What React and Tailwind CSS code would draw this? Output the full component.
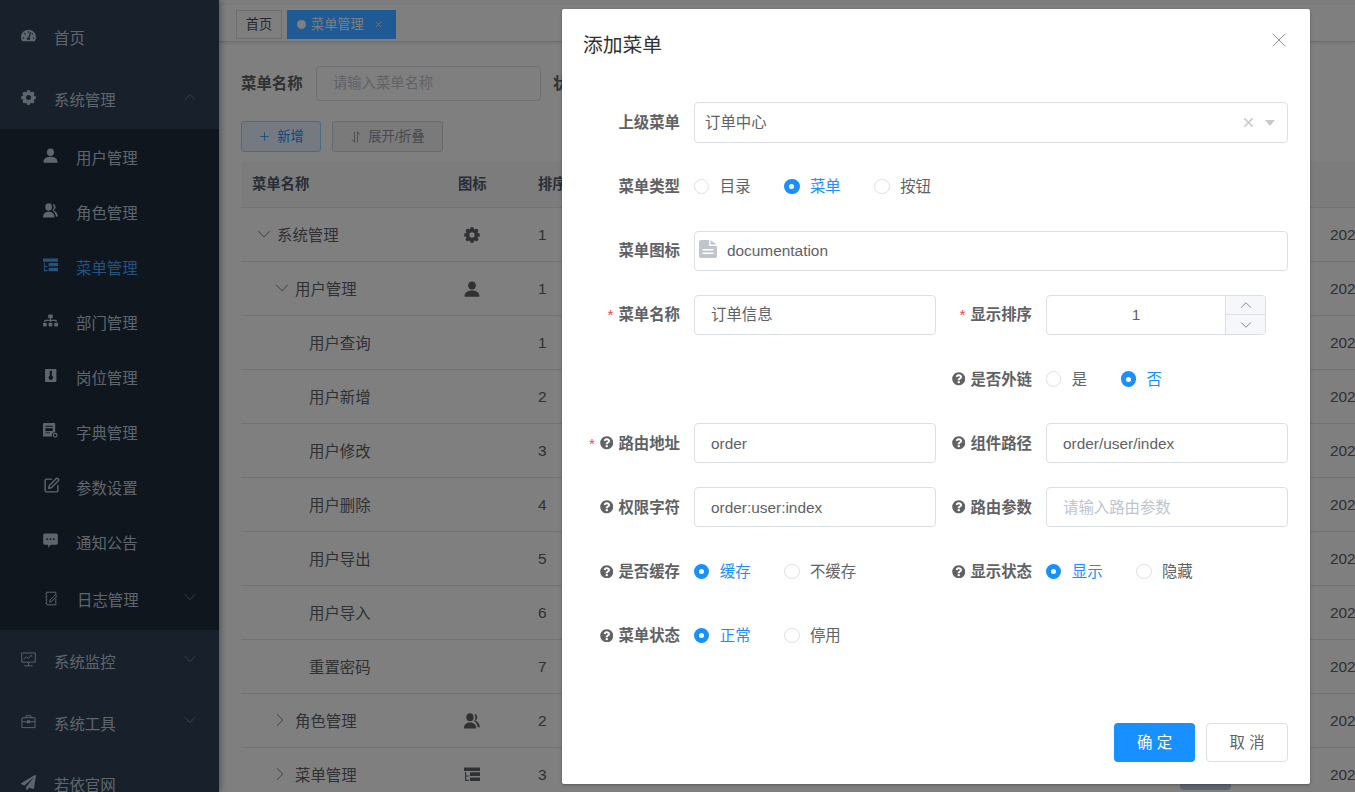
import { FaTachometerAlt, FaSitemap, FaPaperPlane, FaQuestionCircle } from "react-icons/fa";
import { Plus, ChevronUp, ChevronDown, ChevronRight, X, SquarePen } from "lucide-react";

function GearIcon({ className }) {
  const lobes = [0, 45, 90, 135, 180, 225, 270, 315];
  return (
    <svg viewBox="0 0 24 24" className={className} fill="currentColor">
      <circle cx="12" cy="12" r="6.6" fill="none" stroke="currentColor" strokeWidth="5.2" />
      {lobes.map((a) => (
        <circle key={a} cx={12 + 9 * Math.cos((a * Math.PI) / 180)} cy={12 + 9 * Math.sin((a * Math.PI) / 180)} r="3" />
      ))}
    </svg>
  );
}

function UserIcon({ className }) {
  return (
    <svg viewBox="0 0 16 16" className={className} fill="currentColor">
      <ellipse cx="8" cy="4.4" rx="3.8" ry="4" />
      <path d="M.6 15.2c-.3-3.6 2.6-5.8 7.4-5.8s7.7 2.2 7.4 5.8c0 .4-.3.6-.7.6H1.3c-.4 0-.7-.2-.7-.6z" />
    </svg>
  );
}

function PeoplesIcon({ className }) {
  return (
    <svg viewBox="0 0 16 16" className={className} fill="currentColor">
      <ellipse cx="6" cy="4.2" rx="3.6" ry="4" />
      <path d="M0 15.4c-.2-3.6 2-6 6-6s6.400 2.400 6.200 6H0z" />
      <path d="M10.400.8c1.800.3 2.900 1.700 2.900 3.400 0 1.500-.8 2.800-2.100 3.400 2.700 1 4.400 3.400 4.800 6.700h-2.200c-.5-2.800-1.700-5-3.800-6.200 1-1.100 1.500-2.400 1.400-3.900-.1-1.300-.4-2.500-1-3.400z" />
    </svg>
  );
}

function TreeTableIcon({ className }) {
  return (
    <svg viewBox="0 0 16 16" className={className} fill="currentColor">
      <path d="M0 .5h16v3.400H4.800v.1H0zM1 5h1.100v3.400H4.800v1.100H2.100v3.300H4.800V14H1z" />
      <path d="M6 5.300h10v3.600H6zM6 10.400h10V14H6z" />
    </svg>
  );
}

function PostIcon({ className }) {
  return (
    <svg viewBox="0 0 16 16" className={className} fill="currentColor">
      <path fillRule="evenodd" d="M3 1h10.500c.5 0 .8.300.8.800v12.400c0 .5-.3.800-.8.800H3c-.5 0-.8-.3-.8-.8V1.800c0-.5.300-.8.800-.8zm4.200 2v5.200a2.300 2.300 0 1 0 2.300 0V3z" />
    </svg>
  );
}

function DictIcon({ className }) {
  return (
    <svg viewBox="0 0 16 16" className={className} fill="currentColor">
      <path fillRule="evenodd" d="M1 0h11c.6 0 1 .4 1 1v8.800a3.300 3.300 0 0 0-3.400 4.700H1c-.6 0-1-.4-1-1V1c0-.6.4-1 1-1zm1.500 3v1h8V3zm0 2.500v3h8v-3zm0 4.500v1h5v-1z" />
      <circle cx="13" cy="13" r="2" fill="none" stroke="currentColor" strokeWidth="1.300" />
    </svg>
  );
}

function LogIcon({ className }) {
  return (
    <svg viewBox="0 0 16 16" className={className} fill="none" stroke="currentColor" strokeWidth="1.100">
      <path d="M3 .8h10.500v3M13.500 8v7.200H3M1.500 3h2M1.500 6.500h2M1.500 10h2M1.500 13.500h2" />
      <path d="M3 .8v14.400" strokeDasharray="2 1.500" />
      <path d="M13 3.800l1.700 1.700-6 6-2.300.6.600-2.300z" />
    </svg>
  );
}

function MonitorIcon({ className }) {
  return (
    <svg viewBox="0 0 16 16" className={className} fill="none" stroke="currentColor" strokeWidth="1">
      <path d="M.8 1h14.400v9.800H.8zM8 10.800v3.700M3.500 14.700h9" />
      <path d="M3 8l2.800-3 2 2 3-3.500.8 1.500" />
    </svg>
  );
}

function ToolIcon({ className }) {
  return (
    <svg viewBox="0 0 16 16" className={className} fill="none" stroke="currentColor" strokeWidth="1">
      <path d="M1 4h14v10.500H1zM5.500 4V1.800h5V4M1 8.300h5.800M9.200 8.300H15" />
      <rect x="6.800" y="7.300" width="2.400" height="2" fill="currentColor" />
    </svg>
  );
}

function MessageIcon({ className }) {
  return (
    <svg viewBox="0 0 16 16" className={className} fill="currentColor">
      <path fillRule="evenodd" d="M2 .5h12c1 0 1.800.8 1.800 1.800v8.400c0 1-.8 1.800-1.800 1.800H8.500L5.500 15.500V12.500H2c-1 0-1.800-.8-1.800-1.800V2.300C.2 1.300 1 .5 2 .5zM4.500 5.500a1 1 0 1 0 0 2 1 1 0 0 0 0-2zm3.500 0a1 1 0 1 0 0 2 1 1 0 0 0 0-2zm3.500 0a1 1 0 1 0 0 2 1 1 0 0 0 0-2z" />
    </svg>
  );
}

function DocIcon({ className }) {
  return (
    <svg viewBox="0 0 18 18" className={className} fill="currentColor">
      <path fillRule="evenodd" d="M2 0h8v4.500c0 1 .7 1.500 1.500 1.500H18v10c0 1.100-.9 2-2 2H2c-1.100 0-2-.9-2-2V2C0 .9.900 0 2 0zm1.500 9v1.500h11V9zm0 3.500V14h11v-1.500z" />
      <path d="M11.500 .3L17.800 4.500h-6.300z" />
    </svg>
  );
}

function ExpandIcon({ className }) {
  return (
    <svg viewBox="0 0 16 16" className={className} fill="none" stroke="currentColor" strokeWidth="1.200">
      <path d="M6 1v14L2.500 11M10 15V1l3.500 4" />
    </svg>
  );
}

function SideItem({ icon: Icon, label, sub, active, arrow, iconSize = "w-[15px] h-[15px]", iconGap = "mr-[18px]" }) {
  return (
    <div className={`flex items-center ${sub ? "h-[55px] pl-[43px] bg-[#1f2d3d]" : "h-[61.6px] pl-[21px]"} ${active ? "text-[#46a6ff]" : "text-[#bfcbd9]"}`}>
      <Icon className={`${iconSize} ${iconGap} shrink-0 -translate-y-[1px]`} size={15} />
      <span className="text-[15.4px] translate-y-[1.5px]">{label}</span>
      {arrow === "up" && <ChevronUp className="ml-auto mr-[19px] -translate-y-[1px] text-[#909399]" size={20} strokeWidth={1} />}
      {arrow === "down" && <ChevronDown className="ml-auto mr-[19px] -translate-y-[2px] text-[#909399]" size={20} strokeWidth={1} />}
    </div>
  );
}

function Sidebar() {
  return (
    <aside className="w-[219px] shrink-0 h-[792px] overflow-hidden bg-[#304156] pt-[6px] shadow-[2px_0_6px_rgba(0,21,41,0.35)] z-10">
      <SideItem icon={FaTachometerAlt} label="首页" />
      <SideItem icon={GearIcon} label="系统管理" arrow="up" />
      <SideItem sub icon={UserIcon} label="用户管理" />
      <SideItem sub icon={PeoplesIcon} label="角色管理" />
      <SideItem sub active icon={TreeTableIcon} label="菜单管理" />
      <SideItem sub icon={FaSitemap} label="部门管理" />
      <SideItem sub icon={PostIcon} label="岗位管理" />
      <SideItem sub icon={DictIcon} label="字典管理" />
      <SideItem sub icon={SquarePen} label="参数设置" iconSize="w-[17px] h-[17px]" iconGap="mr-[16px]" />
      <SideItem sub icon={MessageIcon} label="通知公告" />
      <div className="flex items-center h-[60.6px] pl-[44px] bg-[#1f2d3d] text-[#bfcbd9]">
        <LogIcon className="w-[14px] h-[15px] mr-[19px] -translate-y-[1px]" />
        <span className="text-[15.4px] translate-y-[1px]">日志管理</span>
        <ChevronDown className="ml-auto mr-[19px] -translate-y-[2px] text-[#909399]" size={20} strokeWidth={1} />
      </div>
      <SideItem icon={MonitorIcon} label="系统监控" arrow="down" />
      <SideItem icon={ToolIcon} label="系统工具" arrow="down" />
      <SideItem icon={FaPaperPlane} label="若依官网" />
    </aside>
  );
}

const rows = [
  { name: "系统管理", level: 0, open: true, icon: GearIcon, sort: 1 },
  { name: "用户管理", level: 1, open: true, icon: UserIcon, sort: 1 },
  { name: "用户查询", level: 2, sort: 1 },
  { name: "用户新增", level: 2, sort: 2 },
  { name: "用户修改", level: 2, sort: 3 },
  { name: "用户删除", level: 2, sort: 4 },
  { name: "用户导出", level: 2, sort: 5 },
  { name: "用户导入", level: 2, sort: 6 },
  { name: "重置密码", level: 2, sort: 7 },
  { name: "角色管理", level: 1, icon: PeoplesIcon, sort: 2 },
  { name: "菜单管理", level: 1, icon: TreeTableIcon, sort: 3 },
];

function TableName({ row }) {
  if (row.level === 2) {
    return <span className="pl-[68px] translate-y-[1px]">{row.name}</span>;
  }
  if (row.open) {
    return (
      <span className={`flex items-center ${row.level === 0 ? "pl-[12px]" : "pl-[30px]"}`}>
        <ChevronDown size={22} strokeWidth={1.100} className="mr-[2px] text-[#909399]" />
        <span className="translate-y-[1px]">{row.name}</span>
      </span>
    );
  }
  return (
    <span className="flex items-center pl-[28px]">
      <ChevronRight size={22} strokeWidth={1.100} className="mr-[4px] text-[#909399]" />
      <span className="translate-y-[1px]">{row.name}</span>
    </span>
  );
}

function MenuTable() {
  return (
    <div className="w-[1218px] text-[15.4px] text-[#606266]">
      <div className="grid grid-cols-[206px_80px_792px_140px] h-[47px] items-center bg-[#f8f8f9] border-b border-[#dfe6ec] font-bold text-[14.3px] text-[#515a6e]">
        <div className="pl-[11px] translate-y-[1px]">菜单名称</div>
        <div className="pl-[11px] translate-y-[1px]">图标</div>
        <div className="pl-[11px] translate-y-[1px]">排序</div>
        <div />
      </div>
      {rows.map((row) => {
        const Icon = row.icon;
        return (
          <div key={row.name} className="grid grid-cols-[206px_80px_792px_140px] h-[54px] items-center border-b border-[#dfe6ec]">
            <TableName row={row} />
            <div className="pl-[17px]">{Icon && <Icon className="w-[16px] h-[16px]" />}</div>
            <div className="pl-[11px]">{row.sort}</div>
            <div className="pl-[11px] whitespace-nowrap">2021-05-26 18:56:54</div>
          </div>
        );
      })}
    </div>
  );
}

function Main() {
  return (
    <main className="flex-1 min-w-0 h-[792px] overflow-hidden bg-white">
      <div className="h-[5px] bg-[#fafafa]" />
      <div className="h-[37px] flex items-start pt-[5px] pl-[17px] gap-[5px] bg-white border-b border-[#d8dce5] shadow-[0_1px_3px_rgba(0,0,0,0.12)]">
        <div className="h-[29px] w-[46px] border border-[#d8dce5] flex items-center justify-center text-[13.2px] text-[#495060]">首页</div>
        {/* 选中的标签颜色比遮罩后的结果更亮，放到遮罩上面 */}
        <div className="relative z-30 h-[29px] w-[109px] bg-[#205a94] flex items-center pl-[10px] text-[13.2px] text-[#7f7f7f]">
          <span className="w-[9px] h-[9px] rounded-full bg-[#7f7f7f] mr-[5px]" />
          菜单管理
          <X size={9} className="ml-[10px]" />
        </div>
      </div>
      <div className="pl-[22px] pt-[24px]">
        <div className="flex items-center h-[35px] mb-[20px]">
          <span className="w-[75px] font-bold text-[15.4px] text-[#606266]">菜单名称</span>
          <div className="w-[225px] h-[35px] border border-[#dcdfe6] rounded-[4px] flex items-center pl-[16px] text-[14.3px] text-[#c0c4cc]">请输入菜单名称</div>
          <span className="ml-[12px] font-bold text-[15.4px] text-[#606266]">状态</span>
        </div>
        <div className="flex gap-[11px] mb-[9px] text-[13.2px]">
          <div className="w-[80px] h-[31px] rounded-[3px] border border-[#a3d3ff] bg-[#e8f4ff] text-[#1890ff] flex items-center justify-center gap-[6px]">
            <Plus size={13} strokeWidth={1.5} />
            新增
          </div>
          <div className="w-[111px] h-[31px] rounded-[3px] border border-[#d3d4d6] bg-[#f4f4f5] text-[#909399] flex items-center justify-center gap-[6px]">
            <ExpandIcon className="w-[12px] h-[12px]" />
            展开/折叠
          </div>
        </div>
        <MenuTable />
      </div>
      <div className="absolute left-[1180px] top-[770px] w-[51px] h-[20px] rounded-[4px] bg-[#b8c8dc]" />
    </main>
  );
}

function Label({ text, required, help, width }) {
  return (
    <div className={`${width} mr-[14px] shrink-0 flex items-center justify-end font-bold text-[15.4px] text-[#606266]`}>
      {required && <span className="text-[#ff4949] mr-[5px] font-normal">*</span>}
      {help && <FaQuestionCircle size={13.5} className="mr-[5px]" />}
      {text}
    </div>
  );
}

function Input({ value, placeholder, width = "w-[242px]" }) {
  return (
    <div className={`${width} h-[40px] border border-[#dcdfe6] rounded-[4px] pl-[16px] flex items-center text-[15.4px] ${value ? "text-[#606266]" : "text-[#c0c4cc]"}`}>
      {value || placeholder}
    </div>
  );
}

function Radio({ label, checked }) {
  return (
    <div className={`flex items-center mr-[33.600px] text-[15.4px] ${checked ? "text-[#1890ff]" : "text-[#606266]"}`}>
      <span className={`w-[15.400px] h-[15.400px] rounded-full mr-[10.400px] flex items-center justify-center ${checked ? "bg-[#1890ff]" : "border border-[#dcdfe6]"}`}>
        {checked && <span className="w-[5px] h-[5px] rounded-full bg-white" />}
      </span>
      {label}
    </div>
  );
}

function RadioGroup({ options, value, width = "w-[242px]" }) {
  return (
    <div className={`${width} flex items-center`}>
      {options.map((o) => (
        <Radio key={o} label={o} checked={o === value} />
      ))}
    </div>
  );
}

function Row({ children }) {
  return <div className="flex items-center h-[40px]">{children}</div>;
}

function Dialog() {
  return (
    <div className="w-[748px] h-[775px] mt-[9px] ml-[562px] bg-white rounded-[2px] shadow-[0_1px_3px_rgba(0,0,0,0.3)] flex flex-col">
      <div className="flex items-center justify-between pt-[22px] pl-[21px] pr-[19px]">
        <span className="text-[19.8px] leading-[26px] text-[#303133] translate-y-[0.5px]">添加菜单</span>
        <X size={24} strokeWidth={1} className="text-[#909399] -translate-y-[4px]" />
      </div>
      <div className="pt-[45.700px] flex flex-col gap-[24.100px]">
        <Row>
          <Label text="上级菜单" width="w-[118px]" />
          <div className="w-[594px] h-[41px] border border-[#dcdfe6] rounded-[4px] pl-[10px] pr-[12px] flex items-center text-[15.4px] text-[#606266]">
            订单中心
            <X size={15} strokeWidth={2.5} className="ml-auto mr-[9px] text-[#c8c8c8]" />
            <span className="w-0 h-0 border-x-[5.5px] border-x-transparent border-t-[6px] border-t-[#c8c8c8]" />
          </div>
        </Row>
        <Row>
          <Label text="菜单类型" width="w-[118px]" />
          <RadioGroup options={["目录", "菜单", "按钮"]} value="菜单" width="w-[594px]" />
        </Row>
        <Row>
          <Label text="菜单图标" width="w-[118px]" />
          <div className="w-[594px] h-[40px] border border-[#dcdfe6] rounded-[4px] pl-[4px] flex items-start pt-[8px] text-[15.4px] text-[#606266]">
            <DocIcon className="w-[18px] h-[18px] text-[#c0c4cc]" />
            <span className="ml-[10px] leading-[21px]">documentation</span>
          </div>
        </Row>
        <Row>
          <Label text="菜单名称" required width="w-[118px]" />
          <Input value="订单信息" />
          <Label text="显示排序" required width="w-[96px]" />
          <div className="w-[220px] h-[40px] border border-[#dcdfe6] rounded-[4px] flex text-[15.4px] text-[#606266] overflow-hidden">
            <div className="flex-1 flex items-center justify-center">1</div>
            <div className="w-[40px] border-l border-[#dcdfe6] bg-[#f5f7fa] flex flex-col">
              <div className="flex-1 flex items-center justify-center border-b border-[#dcdfe6]"><ChevronUp size={18} strokeWidth={1} /></div>
              <div className="flex-1 flex items-center justify-center"><ChevronDown size={18} strokeWidth={1} /></div>
            </div>
          </div>
        </Row>
        <Row>
          <div className="w-[374px] shrink-0" />
          <Label text="是否外链" help width="w-[96px]" />
          <RadioGroup options={["是", "否"]} value="否" />
        </Row>
        <Row>
          <Label text="路由地址" required help width="w-[118px]" />
          <Input value="order" />
          <Label text="组件路径" help width="w-[96px]" />
          <Input value="order/user/index" />
        </Row>
        <Row>
          <Label text="权限字符" help width="w-[118px]" />
          <Input value="order:user:index" />
          <Label text="路由参数" help width="w-[96px]" />
          <Input placeholder="请输入路由参数" />
        </Row>
        <Row>
          <Label text="是否缓存" help width="w-[118px]" />
          <RadioGroup options={["缓存", "不缓存"]} value="缓存" />
          <Label text="显示状态" help width="w-[96px]" />
          <RadioGroup options={["显示", "隐藏"]} value="显示" />
        </Row>
        <Row>
          <Label text="菜单状态" help width="w-[118px]" />
          <RadioGroup options={["正常", "停用"]} value="正常" />
        </Row>
      </div>
      <div className="mt-auto pb-[22px] pr-[22px] flex justify-end gap-[11px] text-[15.4px]">
        <div className="w-[81px] h-[39px] rounded-[4px] bg-[#1890ff] text-white flex items-center justify-center">确 定</div>
        <div className="w-[82px] h-[39px] rounded-[4px] border border-[#dcdfe6] text-[#606266] flex items-center justify-center">取 消</div>
      </div>
    </div>
  );
}

export default function App() {
  return (
    <div className="w-[1355px] h-[792px] overflow-hidden relative flex font-['Liberation_Sans','Noto_Sans_CJK_SC',sans-serif]">
      <Sidebar />
      <Main />
      {/* 遮罩 + 弹窗 */}
      <div className="absolute inset-0 z-20 bg-black/50 overflow-hidden">
        <Dialog />
      </div>
    </div>
  );
}
